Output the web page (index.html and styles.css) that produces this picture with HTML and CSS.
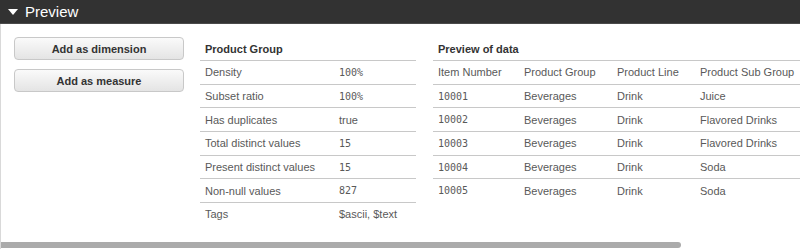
FILE: index.html
```html
<!DOCTYPE html>
<html lang="en">
<head>
  <meta charset="UTF-8" />
  <title>Preview</title>
  <link rel="stylesheet" href="styles.css">
</head>
<body>
  <div class="panel">
    <div class="panel-header">
      <span class="caret"></span>
      <span class="panel-title">Preview</span>
    </div>
    <div class="panel-body">
      <div class="actions">
        <button class="btn">Add as dimension</button>
        <button class="btn">Add as measure</button>
      </div>

      <table class="info">
        <thead>
          <tr><th colspan="2">Product Group</th></tr>
        </thead>
        <tbody>
          <tr><td>Density</td><td class="num">100%</td></tr>
          <tr><td>Subset ratio</td><td class="num">100%</td></tr>
          <tr><td>Has duplicates</td><td>true</td></tr>
          <tr><td>Total distinct values</td><td class="num">15</td></tr>
          <tr><td>Present distinct values</td><td class="num">15</td></tr>
          <tr><td>Non-null values</td><td class="num">827</td></tr>
          <tr class="last"><td>Tags</td><td>$ascii, $text</td></tr>
        </tbody>
      </table>

      <div class="data-wrap">
        <table class="data">
          <thead>
            <tr><th colspan="4">Preview of data</th></tr>
          </thead>
          <tbody>
            <tr class="cols"><td>Item Number</td><td>Product Group</td><td>Product Line</td><td>Product Sub Group</td></tr>
            <tr><td class="num">10001</td><td>Beverages</td><td>Drink</td><td>Juice</td></tr>
            <tr><td class="num">10002</td><td>Beverages</td><td>Drink</td><td>Flavored Drinks</td></tr>
            <tr><td class="num">10003</td><td>Beverages</td><td>Drink</td><td>Flavored Drinks</td></tr>
            <tr><td class="num">10004</td><td>Beverages</td><td>Drink</td><td>Soda</td></tr>
            <tr class="last"><td class="num">10005</td><td>Beverages</td><td>Drink</td><td>Soda</td></tr>
          </tbody>
        </table>
      </div>
    </div>
    <div class="scrollbar"><div class="thumb"></div></div>
  </div>
</body>
</html>
```

FILE: styles.css
```css
body {
  margin: 0;
  background: #fff;
  font-family: "Liberation Sans", Arial, sans-serif;
  color: #595959;
  overflow: hidden;
}
.panel {
  width: 800px;
  height: 249px;
  display: flex;
  flex-direction: column;
  border-left: 1px solid #d9d9d9;
  box-sizing: border-box;
}
.panel-header {
  height: 24px;
  background: #323232;
  border-bottom: 1px solid #4a4a4a;
  display: flex;
  align-items: center;
  padding-left: 8px;
  box-sizing: border-box;
  margin-left: -1px;
}
.caret {
  width: 0;
  height: 0;
  border-left: 5px solid transparent;
  border-right: 5px solid transparent;
  border-top: 6px solid #fff;
  margin-right: 7px;
}
.panel-title {
  color: #fff;
  font-size: 15px;
  font-family: "Liberation Sans", Arial, sans-serif;
}
.panel-body {
  flex: 1;
  display: flex;
  align-items: flex-start;
  padding: 13px 0 0 13px;
  overflow: hidden;
}
.actions {
  width: 170px;
  display: flex;
  flex-direction: column;
  gap: 9px;
  margin-right: 16px;
}
.btn {
  height: 23px;
  border: 1px solid #c8c8c8;
  border-radius: 4px;
  background: linear-gradient(#fafafa, #e4e4e4);
  font-family: "Liberation Sans", Arial, sans-serif;
  font-size: 11px;
  font-weight: bold;
  color: #333;
  cursor: pointer;
  padding: 0;
}
table {
  border-collapse: collapse;
  font-size: 11px;
}
th {
  text-align: left;
  font-weight: bold;
  color: #333;
  height: 23px;
  padding: 0 5px;
  border-bottom: 1px solid #c8c8c8;
}
td {
  height: 22.7px;
  padding: 0 5px;
  border-bottom: 1px solid #c8c8c8;
  white-space: nowrap;
}
tr.last td {
  border-bottom: none;
}
.num {
  font-family: "DejaVu Sans Mono", monospace;
  font-size: 10px;
}
.info {
  width: 216px;
  margin-right: 17px;
}
.info td:first-child {
  width: 124px;
}
.data-wrap {
  flex: 1;
  overflow: hidden;
}
.data {
  width: 380px;
}
.data td:nth-child(1) { width: 76px; }
.data td:nth-child(2) { width: 83px; }
.data td:nth-child(3) { width: 73px; }
.scrollbar {
  height: 6px;
  padding-bottom: 1px;
}
.thumb {
  width: 680px;
  height: 6px;
  background: #ababab;
  border-radius: 0 3px 3px 0;
}
```
